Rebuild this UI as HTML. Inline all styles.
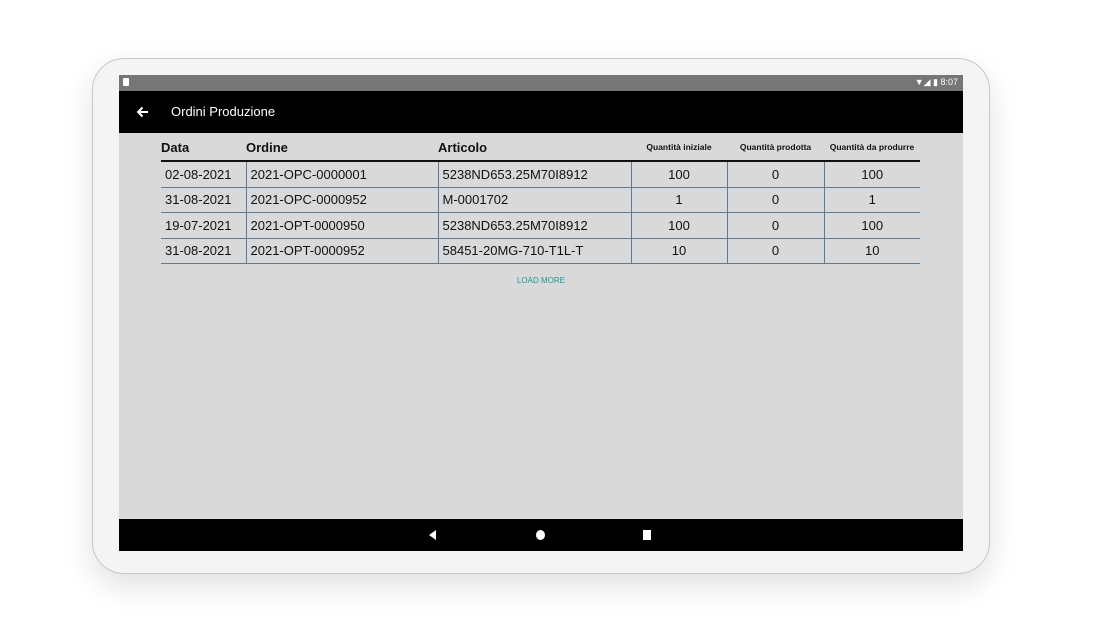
<!DOCTYPE html><html><head><style>
body{margin:0;width:1098px;height:640px;background:#fff;position:relative;overflow:hidden;font-family:"Liberation Sans",sans-serif}
.frame{position:absolute;left:92px;top:58px;width:896px;height:514px;border:1px solid #c8c8c8;border-radius:32px;background:#f4f4f4;box-shadow:0 12px 30px rgba(0,0,0,.12)}
.scr{position:absolute;left:119px;top:75px;width:844px;height:476px;background:#d9d9d9}
.sb{position:absolute;left:0;top:0;width:844px;height:16px;background:#767676;color:#fff;font-size:9px}
.ab{position:absolute;left:0;top:16px;width:844px;height:42px;background:#000;color:#fff;font-size:13px}
.nb{position:absolute;left:0;top:444px;width:844px;height:32px;background:#000}
table{position:absolute;left:42px;top:59px;border-collapse:collapse;font-size:13px;color:#111}
th{font-weight:bold;text-align:left;height:26px;padding:0;border-bottom:2px solid #111;vertical-align:middle}
th.q{font-size:8.5px;text-align:center}
td{height:24.5px;padding:0 4px;border-bottom:1px solid #5c7a94;border-left:1px solid #5c7a94}
td:first-child{border-left:none}
td.c{text-align:center}
</style></head><body>
<div class="frame"></div>
<div class="scr">
<div class="sb"><span style="position:absolute;left:4px;top:3px;width:6px;height:8px;background:#fff;border-radius:1px"></span><span style="position:absolute;right:5px;top:2px">▼◢ ▮ 8:07</span></div>
<div class="ab"><svg style="position:absolute;left:17px;top:15px" width="13" height="12" viewBox="0 0 13 12"><path d="M12 6H2M6.5 1.5L2 6l4.5 4.5" stroke="#fff" stroke-width="2" fill="none"/></svg><span style="position:absolute;left:52px;top:13px">Ordini Produzione</span></div>
<table>
<tr><th style="width:85px">Data</th><th style="width:192px">Ordine</th><th style="width:193px">Articolo</th><th class="q" style="width:96px">Quantità iniziale</th><th class="q" style="width:97px">Quantità prodotta</th><th class="q" style="width:96px">Quantità da produrre</th></tr>
<tr><td>02-08-2021</td><td>2021-OPC-0000001</td><td>5238ND653.25M70I8912</td><td class="c">100</td><td class="c">0</td><td class="c">100</td></tr>
<tr><td>31-08-2021</td><td>2021-OPC-0000952</td><td>M-0001702</td><td class="c">1</td><td class="c">0</td><td class="c">1</td></tr>
<tr><td>19-07-2021</td><td>2021-OPT-0000950</td><td>5238ND653.25M70I8912</td><td class="c">100</td><td class="c">0</td><td class="c">100</td></tr>
<tr><td>31-08-2021</td><td>2021-OPT-0000952</td><td>58451-20MG-710-T1L-T</td><td class="c">10</td><td class="c">0</td><td class="c">10</td></tr>
</table>
<div style="position:absolute;left:0;width:844px;top:201px;text-align:center;font-size:8px;color:#1a9a9a">LOAD MORE</div>
<div class="nb">
<div style="position:absolute;left:310px;top:11px;width:0;height:0;border-top:5px solid transparent;border-bottom:5px solid transparent;border-right:7px solid #fff"></div>
<div style="position:absolute;left:417px;top:11px;width:9px;height:10px;border-radius:50%;background:#fff"></div>
<div style="position:absolute;left:524px;top:11px;width:8px;height:10px;background:#fff"></div>
</div>
</div>
</body></html>
